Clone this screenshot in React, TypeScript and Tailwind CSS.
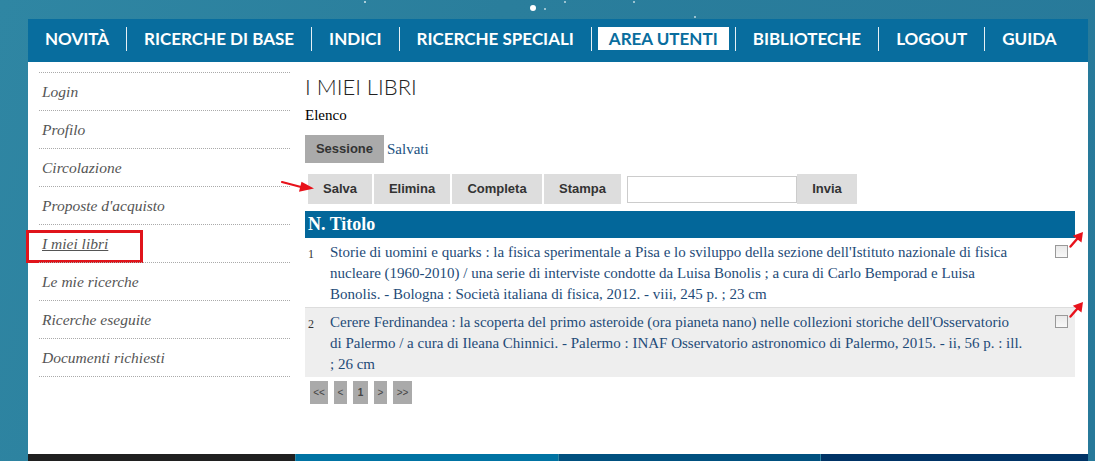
import React from "react";

const navItems = ["NOVITÀ", "RICERCHE DI BASE", "INDICI", "RICERCHE SPECIALI", "AREA UTENTI", "BIBLIOTECHE", "LOGOUT", "GUIDA"];

const sideItems = [
  "Login",
  "Profilo",
  "Circolazione",
  "Proposte d'acquisto",
  "I miei libri",
  "Le mie ricerche",
  "Ricerche eseguite",
  "Documenti richiesti",
];

// each record as the lines it takes in the list
const books = [
  [
    "Storie di uomini e quarks : la fisica sperimentale a Pisa e lo sviluppo della sezione dell'Istituto nazionale di fisica",
    "nucleare (1960-2010) / una serie di interviste condotte da Luisa Bonolis ; a cura di Carlo Bemporad e Luisa",
    "Bonolis. - Bologna : Società italiana di fisica, 2012. - viii, 245 p. ; 23 cm",
  ],
  [
    "Cerere Ferdinandea : la scoperta del primo asteroide (ora pianeta nano) nelle collezioni storiche dell'Osservatorio",
    "di Palermo / a cura di Ileana Chinnici. - Palermo : INAF Osservatorio astronomico di Palermo, 2015. - ii, 56 p. : ill.",
    "; 26 cm",
  ],
];

const serif = "font-['Liberation_Serif',serif]";
const arial = "font-['Liberation_Sans',Arial,sans-serif]";

function RedArrow({ className }: { className: string }) {
  return (
    <svg className={className} viewBox="0 0 14 16" fill="#e8121b">
      <path d="M1.5 14.5 L8 7" stroke="#e8121b" strokeWidth="2.4" strokeLinecap="round" />
      <polygon points="14,0 12.5,10.5 3.8,3.8" />
    </svg>
  );
}

const App = () => {
  return (
    <div className="relative w-full h-[461px] overflow-hidden bg-[linear-gradient(110deg,#2f86a3_0%,#2a7e9c_40%,#27799a_100%)]">
      {/* stars */}
      <div className="absolute left-[364px] top-[1px] w-[2px] h-[2px] rounded-full bg-white/80" />
      <div className="absolute left-[530px] top-[5px] w-[6px] h-[6px] rounded-full bg-white" />
      <div className="absolute left-[544px] top-[8px] w-[2px] h-[2px] rounded-full bg-white/70" />
      <div className="absolute left-[564px] top-[1px] w-[2px] h-[2px] rounded-full bg-white/70" />
      <div className="absolute left-[633px] top-[1px] w-[2px] h-[2px] rounded-full bg-white/70" />
      <div className="absolute left-[694px] top-[16px] w-[2px] h-[2px] rounded-full bg-white/70" />

      <div className="pt-[19px] pl-[28px] pr-[7px]">
        {/* top navigation */}
        <nav className="h-[43px] pb-[4px] bg-[#086d9e] flex items-center font-['Lato',sans-serif] font-bold text-[17px] text-white">
          {navItems.map((item, i) => (
            <React.Fragment key={item}>
              {i > 0 && <span className="w-px h-[24px] bg-white/90" />}
              {item === "AREA UTENTI" ? (
                <span className="mx-[6px] px-[11px] h-[23px] flex items-center bg-white text-[#086d9e]">{item}</span>
              ) : (
                <span className="px-[17px]">{item}</span>
              )}
            </React.Fragment>
          ))}
        </nav>

        <div className="bg-white h-[392px] flex">
          {/* sidebar */}
          <aside className="w-[267px] shrink-0 pt-[10px] pl-[11px] pr-[5px]">
            <ul className={`${serif} italic text-[15.5px] text-[#555] border-b border-dotted border-[#aaa]`}>
              {sideItems.map((s) => (
                <li key={s} className="relative h-[38px] border-t border-dotted border-[#aaa] flex items-center pl-[3px] pt-px">
                  {s === "I miei libri" ? (
                    <>
                      <span className="underline">{s}</span>
                      <span className="absolute left-[-13px] top-[5px] w-[117px] h-[33px] border-[3px] border-[#e0141b]" />
                    </>
                  ) : (
                    s
                  )}
                </li>
              ))}
            </ul>
          </aside>

          {/* main */}
          <main className="flex-1 pl-[10px] pr-[13px] pt-[12px]">
            <h1 className="font-['Lato',sans-serif] font-light text-[22px] leading-[26px] text-[#222]">I MIEI LIBRI</h1>
            <p className={`${serif} text-[15px] text-black mt-[6px] leading-[18px]`}>Elenco</p>

            <div className="flex items-center mt-[11px]">
              <span className={`${arial} font-bold text-[13px] text-[#333] bg-[#aaa] h-[28px] w-[79px] flex items-center justify-center`}>Sessione</span>
              <span className={`${serif} text-[15px] text-[#23527f] ml-[3px]`}>Salvati</span>
            </div>

            <div className={`relative flex items-center mt-[11px] pl-[3px] ${arial} font-bold text-[13px] text-[#333]`}>
              <button className="h-[30px] w-[64px] bg-[#ddd]">Salva</button>
              <button className="h-[30px] w-[76px] bg-[#ddd] ml-[2px]">Elimina</button>
              <button className="h-[30px] w-[90px] bg-[#ddd] ml-[2px]">Completa</button>
              <button className="h-[30px] w-[77px] bg-[#ddd] ml-[2px]">Stampa</button>
              <input className="h-[27px] w-[170px] border border-[#ccc] ml-[6px] outline-none" />
              <button className="h-[30px] w-[60px] bg-[#ddd]">Invia</button>
              <svg className="absolute z-10 left-[-24px] top-[6px] w-[34px] h-[12px]" viewBox="0 0 34 12" fill="#e8121b">
                <path d="M1 2 L20 7" stroke="#e8121b" strokeWidth="2.2" strokeLinecap="round" />
                <polygon points="33,8.5 18,11.8 20.5,1.8" />
              </svg>
            </div>

            <div className="mt-[7px]">
              <div className={`h-[27px] bg-[#03679a] flex items-center pl-[3px] ${serif} font-bold text-[18px] text-white`}>N. Titolo</div>
              {books.map((lines, i) => (
                <div
                  key={i}
                  className={`relative flex ${serif} ${i === 1 ? "bg-[#eee] border-t border-[#ddd] h-[70px]" : "bg-white h-[69px]"}`}
                >
                  <span className="w-[25px] shrink-0 pl-[3px] pt-[6px] text-[12px] text-[#333] leading-[21px]">{i + 1}</span>
                  <p className="flex-1 whitespace-nowrap text-[15px] leading-[21px] text-[#1e4b78] pt-[4px]">
                    {lines.map((l, j) => (
                      <React.Fragment key={j}>
                        {j > 0 && <br />}
                        {l}
                      </React.Fragment>
                    ))}
                  </p>
                  <div className="w-[26px] shrink-0 pt-[7px] pl-[6px]">
                    <span className="block w-[13px] h-[13px] border border-[#999] bg-[linear-gradient(#e9e9e9,#f8f8f8)]" />
                  </div>
                  <RedArrow className="absolute right-[-8px] top-[-6px] w-[14px] h-[16px]" />
                </div>
              ))}
            </div>

            <div className={`flex items-center gap-[6px] mt-[4px] pl-[5px] ${arial} text-[10px] text-[#444]`}>
              <span className="h-[23px] w-[18px] bg-[#aaa] flex items-center justify-center">&lt;&lt;</span>
              <span className="h-[23px] w-[13px] bg-[#aaa] flex items-center justify-center">&lt;</span>
              <span className="h-[23px] w-[15px] bg-[#aaa] flex items-center justify-center font-bold">1</span>
              <span className="h-[23px] w-[13px] bg-[#aaa] flex items-center justify-center">&gt;</span>
              <span className="h-[23px] w-[19px] bg-[#aaa] flex items-center justify-center">&gt;&gt;</span>
            </div>
          </main>
        </div>

        {/* footer strip */}
        <div className="h-[7px] flex">
          <div className="w-[267px] bg-[#202020]" />
          <div className="w-[263px] bg-[#0073a3] border-l border-[#2f86a3]" />
          <div className="w-[262px] bg-[#00507f] border-l border-[#2f86a3]" />
          <div className="flex-1 bg-[#003366] border-l border-[#2f86a3]" />
        </div>
      </div>
    </div>
  );
};

export default App;
